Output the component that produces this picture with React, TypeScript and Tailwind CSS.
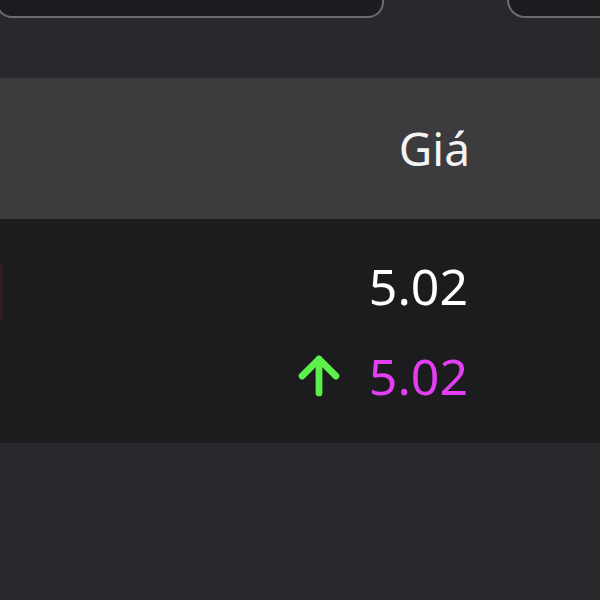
import { ArrowUp } from "lucide-react";

const App = () => {
  return (
    <div className="h-[600px] w-[600px] overflow-hidden bg-[#2a282d] font-['Noto_Sans',sans-serif]">
      <div className="flex h-[18px] gap-[123px]">
        <div className="w-[388px] shrink-0 rounded-b-[16px] border-2 border-t-0 border-[#6c6b70] bg-[#1c1b20] -ml-[4px]"></div>
        <div className="flex-1 rounded-bl-[18px] border-2 border-t-0 border-r-0 border-[#6c6b70] bg-[#1c1b20]"></div>
      </div>
      <div className="mt-[60px] flex h-[141px] items-center justify-end bg-[#3c3c3e] pr-[130px]">
        <span className="text-[46px] text-[#f4f4f4]">Giá</span>
      </div>
      <div className="relative flex h-[224px] flex-col items-end justify-center bg-[#1c1b1e] pr-[132px]">
        <div className="absolute left-0 top-[43px] h-[58px] w-[3px] bg-[#2e1c25]"></div>
        <div className="flex h-[90px] items-center text-[50px] text-white">5.02</div>
        <div className="flex h-[90px] items-center gap-[21px]">
          <ArrowUp size={58} strokeWidth={2.8} className="text-[#5cf04a]" />
          <span className="text-[50px] text-[#e23ff2]">5.02</span>
        </div>
      </div>
    </div>
  );
};

export default App;
